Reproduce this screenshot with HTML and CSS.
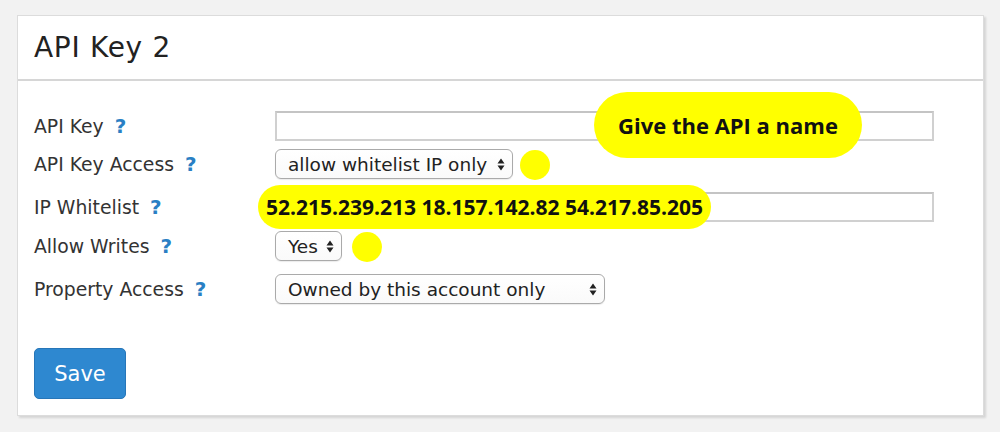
FILE: index.html
```html
<!DOCTYPE html>
<html>
<head>
<meta charset="utf-8">
<link rel="stylesheet" href="styles.css">
</head>
<body>
<div class="card">
  <div class="card-head"><h1>API Key 2</h1></div>
  <div class="card-body">
    <div class="row r1">
      <label>API Key <span class="q">?</span></label>
      <input class="text wide" type="text">
    </div>
    <div class="row r2">
      <label>API Key Access <span class="q">?</span></label>
      <div class="sel w-access"><span>allow whitelist IP only</span><svg class="arr" width="8" height="13" viewBox="0 0 8 13"><path d="M4 0.5L7.5 5.5H0.5Z M4 12.5L7.5 7.5H0.5Z" fill="#222"/></svg></div>
    </div>
    <div class="row r3">
      <label>IP Whitelist <span class="q">?</span></label>
      <input class="text wide" type="text">
    </div>
    <div class="row r4">
      <label>Allow Writes <span class="q">?</span></label>
      <div class="sel w-yes"><span>Yes</span><svg class="arr" width="8" height="13" viewBox="0 0 8 13"><path d="M4 0.5L7.5 5.5H0.5Z M4 12.5L7.5 7.5H0.5Z" fill="#222"/></svg></div>
    </div>
    <div class="row r5">
      <label>Property Access <span class="q">?</span></label>
      <div class="sel w-prop"><span>Owned by this account only</span><svg class="arr" width="8" height="13" viewBox="0 0 8 13"><path d="M4 0.5L7.5 5.5H0.5Z M4 12.5L7.5 7.5H0.5Z" fill="#222"/></svg></div>
    </div>
    <button class="save">Save</button>
  </div>
</div>
<div class="note note-name">Give the API a name</div>
<div class="note note-ip">52.215.239.213 18.157.142.82 54.217.85.205</div>
<div class="dot dot-access"></div>
<div class="dot dot-yes"></div>
</body>
</html>
```
FILE: styles.css
```css
html, body {
  margin: 0;
  padding: 0;
}
body {
  background: #f2f2f2;
  width: 1000px;
  height: 432px;
  overflow: hidden;
  position: relative;
  font-family: "DejaVu Sans", Verdana, sans-serif;
  color: #333;
}
.card {
  margin: 15px 0 0 17px;
  width: 967px;
  height: 401px;
  background: #fff;
  border: 1px solid #dcdcdc;
  box-shadow: 2px 2px 2px rgba(0,0,0,0.12);
  box-sizing: border-box;
}
.card-head {
  height: 65px;
  border-bottom: 2px solid #d6d6d6;
  box-sizing: border-box;
  display: flex;
  align-items: center;
  padding-left: 16px;
}
.card-head h1 {
  margin: 0;
  font-size: 28px;
  font-weight: normal;
  color: #222;
  letter-spacing: 0.7px;
}
.card-body {
  padding: 30px 0 0 16px;
  display: flex;
  flex-direction: column;
  align-items: flex-start;
}
.row {
  display: flex;
  align-items: center;
  height: 30px;
}
.row label {
  width: 241px;
  font-size: 18.8px;
  color: #333;
}
.q {
  color: #2a7fc4;
  font-weight: bold;
  font-size: 20px;
  margin-left: 5px;
}
.r2 { margin-top: 8px; }
.r3 { margin-top: 13px; }
.r4 { margin-top: 9px; }
.r5 { margin-top: 13px; }
.text {
  height: 30px;
  box-sizing: border-box;
  border: 2px solid #d0d0d0;
  border-top-color: #c4c4c4;
  background: #fff;
  margin: 0;
}
.wide { width: 659px; }
.sel {
  height: 30px;
  box-sizing: border-box;
  border: 1px solid #aaa;
  border-radius: 6px;
  background: linear-gradient(#fff, #fafafa);
  box-shadow: 0 1px 1px rgba(0,0,0,0.08);
  display: flex;
  align-items: center;
  justify-content: space-between;
  padding: 0 7px 0 12px;
  font-size: 18.5px;
  color: #222;
}
.arr { flex: none; margin-left: 4px; }
.w-access { width: 238px; }
.w-yes { width: 67px; }
.w-prop { width: 330px; }
.save {
  margin-top: 44px;
  width: 92px;
  height: 51px;
  background: #2e88d0;
  border: 1px solid #2776b8;
  border-radius: 5px;
  color: #fff;
  font-family: "DejaVu Sans", Verdana, sans-serif;
  font-size: 21px;
  padding: 0;
}
.note {
  position: absolute;
  background: #ffff00;
  color: #111;
  font-family: "Open Sans", "Liberation Sans", sans-serif;
  font-weight: bold;
  display: flex;
  align-items: center;
  justify-content: center;
}
.note-name {
  left: 594px;
  top: 92px;
  width: 268px;
  height: 66px;
  border-radius: 33px;
  font-size: 22px;
}
.note-ip {
  left: 258px;
  top: 185px;
  width: 453px;
  height: 44px;
  border-radius: 22px;
  font-size: 21px;
}
.dot {
  position: absolute;
  width: 30px;
  height: 30px;
  border-radius: 50%;
  background: #ffff00;
}
.dot-access { left: 520px; top: 150px; }
.dot-yes { left: 352px; top: 232px; }
```
